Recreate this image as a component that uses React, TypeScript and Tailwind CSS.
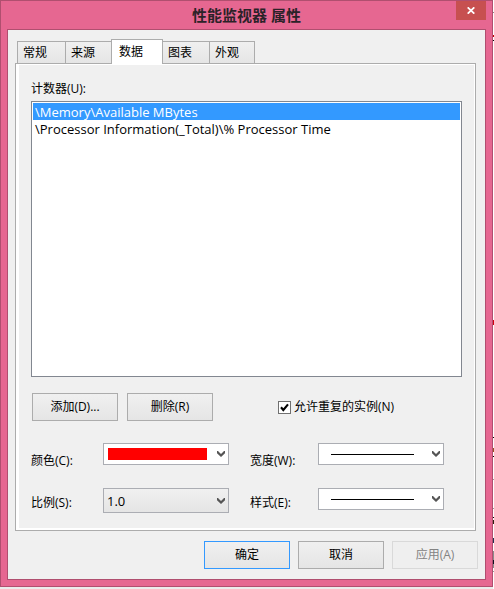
import { useState } from "react";
import type { ReactNode, SelectHTMLAttributes } from "react";

const tabs = [
  { label: "常规", width: "w-[49px]" },
  { label: "来源", width: "w-[47px]" },
  { label: "数据", width: "w-[52px]" },
  { label: "图表", width: "w-[48px]" },
  { label: "外观", width: "w-[46px]" },
];

const counters = [
  "\\Memory\\Available MBytes",
  "\\Processor Information(_Total)\\% Processor Time",
];

// Edges of the window that lies behind the dialog: [top, height, colour]
const backdropMarks: [number, number, string][] = [
  [12, 1, "#8a8a8a"],
  [35, 2, "#c00000"],
  [40, 1, "#000000"],
  [320, 5, "#d00010"],
  [437, 1, "#000000"],
  [448, 4, "#9a5020"],
  [456, 1, "#000000"],
  [479, 1, "#999999"],
  [508, 1, "#999999"],
  [517, 1, "#000000"],
  [520, 4, "#302010"],
  [538, 5, "#203050"],
  [551, 17, "#8c8c8c"],
  [560, 4, "#101020"],
  [571, 1, "#999999"],
];

function PushButton({
  children,
  primary = false,
  disabled = false,
}: {
  children: ReactNode;
  primary?: boolean;
  disabled?: boolean;
}) {
  const look = disabled
    ? "border-[#d9d9d9] bg-[#efefef] text-[#838383]"
    : primary
      ? "border-[#3399ff] bg-linear-to-b from-[#f0f0f0] to-[#e5e5e5]"
      : "border-[#acacac] bg-linear-to-b from-[#f0f0f0] to-[#e5e5e5]";
  return (
    <button type="button" disabled={disabled} className={`h-7 w-[86px] border text-center ${look}`}>
      {children}
    </button>
  );
}

interface ComboProps extends SelectHTMLAttributes<HTMLSelectElement> {
  overlay?: ReactNode;
  tall?: boolean;
}

function Combo({ overlay, tall = false, children, ...rest }: ComboProps) {
  return (
    <div className={`relative w-[126px] ${tall ? "h-[25px]" : "h-[22px]"}`}>
      <select
        {...rest}
        className={`block size-full appearance-none border border-[#abadb3] pl-[3px] text-[13px] ${
          tall ? "bg-linear-to-b from-[#f0f0f0] to-[#e5e5e5]" : "bg-white text-transparent"
        }`}
      >
        {children}
      </select>
      {overlay}
      <svg
        aria-hidden="true"
        viewBox="0 0 8 6"
        className="pointer-events-none absolute inset-y-0 right-1 my-auto h-[6px] w-2"
      >
        <path d="M0 0 H1 L4 3 L7 0 H8 V2.3 L4 6 L0 2.3 Z" fill="#555" />
      </svg>
    </div>
  );
}

const lineSample = (
  <span className="pointer-events-none absolute top-[11px] left-[13px] h-px w-[83px] bg-black" />
);

export default function App() {
  const [active, setActive] = useState(2);

  return (
    <div className="relative bg-[#ececec] pr-px pb-[2px] font-['Open_Sans','Noto_Sans_CJK_SC',sans-serif] text-xs leading-4 text-black">
      <svg aria-hidden="true" className="absolute top-0 right-0 h-full w-px bg-white">
        {backdropMarks.map(([y, h, fill]) => (
          <rect key={y} y={y} width="1" height={h} fill={fill} />
        ))}
      </svg>

      <main className="border border-[#b04f6f] bg-[#e66791] px-[6px] pb-[6px]">
        <header className="relative flex h-7 items-center justify-center">
          <h1 className="text-[15px] leading-5 font-bold text-[#2b2228]">性能监视器 属性</h1>
          <button
            type="button"
            aria-label="关闭"
            className="absolute top-0 right-0 flex h-[19px] w-[30px] items-center justify-center bg-[#c75050]"
          >
            <svg viewBox="0 0 8 7" className="h-[7px] w-2" aria-hidden="true">
              <path d="M0.7 0.3 L7.3 6.7 M7.3 0.3 L0.7 6.7" stroke="#fff" strokeWidth="1.7" />
            </svg>
          </button>
        </header>

        <div className="border border-[#b04f6f] bg-[#f0f0f0] px-[7px] pt-[9px] pb-[10px]">
          <div role="tablist" className="flex items-end pl-[2px]">
            {tabs.map((tab, i) => (
              <button
                key={tab.label}
                type="button"
                role="tab"
                aria-selected={i === active}
                onClick={() => setActive(i)}
                className={`-mr-px border border-b-0 border-[#acacac] pl-[5px] text-left ${tab.width} ${
                  i === active
                    ? "relative z-10 -mb-px h-[25px] bg-white pl-[7px]"
                    : "h-[22px] bg-linear-to-b from-[#f0f0f0] to-[#e5e5e5]"
                }`}
              >
                {tab.label}
              </button>
            ))}
          </div>

          <section role="tabpanel" className="mr-[2px] border border-[#acacac] bg-white pt-px pr-px pb-[2px] pl-[3px]">
            <div className="bg-[#f0f0f0] pt-4 pr-3 pb-[15px] pl-3">
              <label htmlFor="counters" className="block">
                计数器(U):
              </label>
              <select
                id="counters"
                size={16}
                defaultValue={counters[0]}
                className="mt-1 block h-[276px] w-full overflow-hidden border border-[#828790] bg-white p-px text-[13px] outline-none"
              >
                {counters.map((name) => (
                  <option
                    key={name}
                    className="h-[17px] min-h-0 px-[2px] py-0 leading-[17px] text-black checked:bg-[#3399ff] checked:bg-linear-to-r checked:from-[#3399ff] checked:to-[#3399ff] checked:text-white"
                  >
                    {name}
                  </option>
                ))}
              </select>

              <div className="mt-4 flex items-center gap-[9px] pl-px">
                <PushButton>添加(D)...</PushButton>
                <PushButton>删除(R)</PushButton>
                <label className="ml-14 flex items-center gap-[3px]">
                  <span className="relative block size-[13px]">
                    <input
                      type="checkbox"
                      defaultChecked
                      className="peer block size-[13px] appearance-none border border-[#707070] bg-white"
                    />
                    <svg
                      aria-hidden="true"
                      viewBox="0 0 13 13"
                      className="pointer-events-none invisible absolute inset-0 size-[13px] peer-checked:visible"
                    >
                      <path d="M3 6.3 L5.3 9 L10 3.4" fill="none" stroke="#000" strokeWidth="2.1" />
                    </svg>
                  </span>
                  允许重复的实例(N)
                </label>
              </div>

              <div className="mt-[22px] grid grid-cols-[72px_147px_68px_126px] gap-y-[19px]">
                <label htmlFor="color" className="pt-[10px]">
                  颜色(C):
                </label>
                <Combo
                  id="color"
                  overlay={<span className="pointer-events-none absolute top-[5px] left-[5px] h-3 w-[99px] bg-[#ff0000]" />}
                />
                <label htmlFor="width" className="pt-[10px]">
                  宽度(W):
                </label>
                <Combo id="width" overlay={lineSample} />
                <label htmlFor="scale" className="pt-[7px]">
                  比例(S):
                </label>
                <Combo id="scale" tall>
                  <option>1.0</option>
                </Combo>
                <label htmlFor="style" className="pt-[7px]">
                  样式(E):
                </label>
                <Combo id="style" overlay={lineSample} />
              </div>
            </div>
          </section>

          <footer className="mt-[10px] flex justify-end gap-2">
            <PushButton primary>确定</PushButton>
            <PushButton>取消</PushButton>
            <PushButton disabled>应用(A)</PushButton>
          </footer>
        </div>
      </main>
    </div>
  );
}
